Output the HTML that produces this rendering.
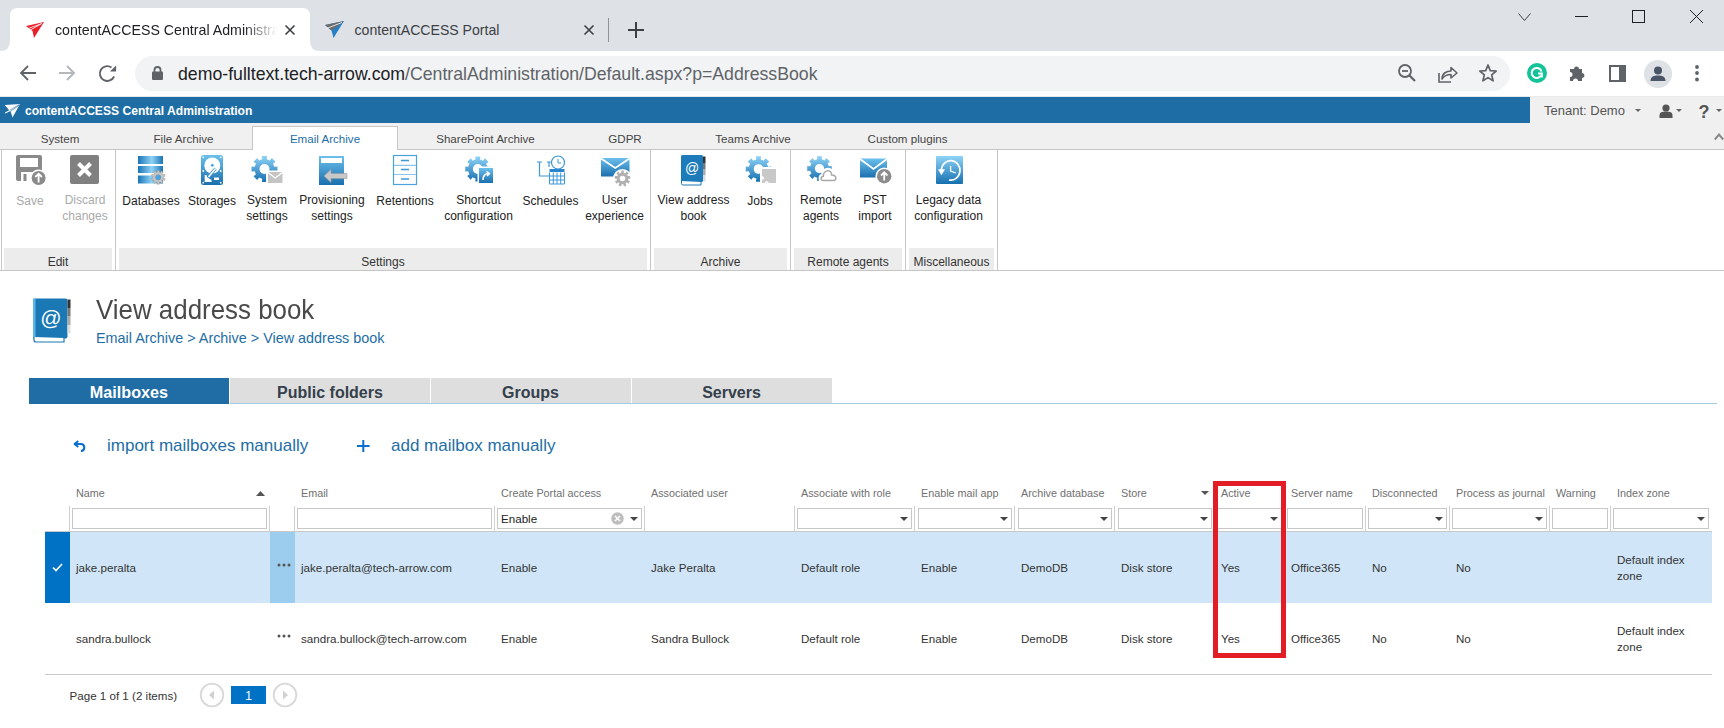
<!DOCTYPE html>
<html><head><meta charset="utf-8">
<style>
*{box-sizing:border-box;margin:0;padding:0}
html,body{width:1724px;height:728px;overflow:hidden;background:#fff;font-family:"Liberation Sans",sans-serif}
body{position:relative}
.a{position:absolute;white-space:nowrap}
svg.a{overflow:visible}
</style></head><body>
<div class="a" style="left:0px;top:0px;width:1724px;height:51px;background:#dee1e6;"></div>
<svg class="a" style="left:0px;top:0px" width="330" height="52" viewBox="0 0 330 52"><path d="M0 51 Q10 51 10 41 L10 16 Q10 8 18 8 L302 8 Q310 8 310 16 L310 41 Q310 51 320 51 Z" fill="#fff"/></svg>
<svg class="a" style="left:26px;top:22px" width="18" height="16" viewBox="0 0 18 16"><path d="M0 4 L18 0 L8 16 L6.5 9 Z" fill="#e8202a"/><path d="M1 7 L16 1.5 M2.5 9 L15 2" stroke="#fff" stroke-width="0.8"/></svg>
<div class="a" style="left:55px;top:22.8px;width:222px;overflow:hidden;font-size:14.2px;line-height:1;color:#202124;-webkit-mask-image:linear-gradient(90deg,#000 85%,transparent 100%)">contentACCESS Central Administration</div>
<svg class="a" style="left:285px;top:25px" width="10" height="10" viewBox="0 0 10 10"><path d="M0.5 0.5 L9.5 9.5 M9.5 0.5 L0.5 9.5" stroke="#3c4043" stroke-width="1.6"/></svg>
<svg class="a" style="left:325px;top:21px" width="19" height="17" viewBox="0 0 19 17"><path d="M0 4 L19 0 L8.5 17 L6.5 9.5 Z" fill="#2a7fc4"/><path d="M0 4 L19 0 L6.5 9.5 Z" fill="#6b6b6b"/><path d="M1.5 7.5 L17 1.5" stroke="#fff" stroke-width="0.8"/></svg>
<div class="a" style="left:354.5px;top:22.86px;font-size:14.1px;line-height:1;color:#3c4043;font-weight:normal;">contentACCESS Portal</div>
<svg class="a" style="left:584px;top:25px" width="10" height="10" viewBox="0 0 10 10"><path d="M0.5 0.5 L9.5 9.5 M9.5 0.5 L0.5 9.5" stroke="#3c4043" stroke-width="1.6"/></svg>
<div class="a" style="left:608px;top:18px;width:1px;height:24px;background:#8f9296;"></div>
<svg class="a" style="left:628px;top:22px" width="16" height="16" viewBox="0 0 16 16"><path d="M8 0 V16 M0 8 H16" stroke="#3c4043" stroke-width="2"/></svg>
<svg class="a" style="left:1518px;top:12.7px" width="13" height="9" viewBox="0 0 13 9"><path d="M0.5 0.5 L6.5 7.5 L12.5 0.5" stroke="#3c4043" stroke-width="1" fill="none"/></svg>
<div class="a" style="left:1575px;top:16px;width:13px;height:1px;background:#202124;"></div>
<div class="a" style="left:1632px;top:10px;width:13px;height:13px;background:transparent;border:1px solid #202124"></div>
<svg class="a" style="left:1690px;top:10px" width="13" height="13" viewBox="0 0 13 13"><path d="M0 0 L13 13 M13 0 L0 13" stroke="#202124" stroke-width="1"/></svg>
<div class="a" style="left:0px;top:51px;width:1724px;height:46px;background:#fff;"></div>
<div class="a" style="left:0px;top:96px;width:1724px;height:1px;background:#e8e9ea;"></div>
<svg class="a" style="left:18.7px;top:64px" width="18" height="18" viewBox="0 0 18 18"><path d="M17 9 H2 M9 2 L2 9 L9 16" stroke="#5f6368" stroke-width="1.8" fill="none"/></svg>
<svg class="a" style="left:58px;top:64px" width="18" height="18" viewBox="0 0 18 18"><path d="M1 9 H16 M9 2 L16 9 L9 16" stroke="#b5b8bb" stroke-width="2" fill="none"/></svg>
<svg class="a" style="left:99px;top:64px" width="18" height="18" viewBox="0 0 18 18"><path d="M15.1 12.3 A7.4 7.4 0 1 1 12.5 3.5" stroke="#5f6368" stroke-width="1.9" fill="none"/><path d="M17.1 1.6 L17.1 7.6 L10.9 7.6 Z" fill="#5f6368"/></svg>
<div class="a" style="left:135px;top:56px;width:1375px;height:35px;background:#f1f3f4;border-radius:18px"></div>
<svg class="a" style="left:152px;top:66px" width="11" height="14" viewBox="0 0 11 14"><rect x="0" y="5.5" width="11" height="8.5" rx="1" fill="#5f6368"/><path d="M2.5 6 V4 A3 3 0 0 1 8.5 4 V6" stroke="#5f6368" stroke-width="1.8" fill="none"/></svg>
<div class="a" style="left:178px;top:65.62px;font-size:17.7px;line-height:1;color:#202124;font-weight:normal;">demo-fulltext.tech-arrow.com<span style="color:#5f6368">/CentralAdministration/Default.aspx?p=AddressBook</span></div>
<svg class="a" style="left:1398px;top:64px" width="18" height="18" viewBox="0 0 18 18"><circle cx="7" cy="7" r="6" stroke="#5f6368" stroke-width="1.8" fill="none"/><path d="M4 7 H10" stroke="#5f6368" stroke-width="1.8"/><path d="M11.5 11.5 L17 17" stroke="#5f6368" stroke-width="2.2"/></svg>
<svg class="a" style="left:1438px;top:65px" width="20" height="18" viewBox="0 0 20 18"><path d="M1 8 V17 H13" stroke="#5f6368" stroke-width="1.6" fill="none"/><path d="M4 14 C4 8 9 6 13 6 V2.5 L19 8 L13 13 V9.5 C9 9.5 6 11 4 14 Z" stroke="#5f6368" stroke-width="1.6" fill="none" stroke-linejoin="round"/></svg>
<svg class="a" style="left:1479px;top:64px" width="18" height="18" viewBox="0 0 18 18"><path d="M9 1 L11.3 6.6 L17.2 7 L12.7 10.9 L14.1 16.8 L9 13.6 L3.9 16.8 L5.3 10.9 L0.8 7 L6.7 6.6 Z" stroke="#5f6368" stroke-width="1.7" fill="none" stroke-linejoin="round"/></svg>
<svg class="a" style="left:1527px;top:63px" width="20" height="20" viewBox="0 0 20 20"><circle cx="10" cy="10" r="10" fill="#15c39a"/><path d="M14.5 8.5 A5 5 0 1 0 14 12.5" stroke="#fff" stroke-width="2" fill="none"/><path d="M11 10.5 H15 V14.5" stroke="#fff" stroke-width="1.8" fill="none"/></svg>
<svg class="a" style="left:1568px;top:64px" width="18" height="18" viewBox="0 0 18 18"><path d="M2 5 H6 A2.5 2.5 0 0 1 11 5 H14 V9 A2.5 2.5 0 0 1 14 14 V17 H10 A2.5 2.5 0 0 0 5 17 H2 V13 A2.5 2.5 0 0 0 2 8 Z" fill="#5f6368"/></svg>
<div class="a" style="left:1609px;top:65px;width:17px;height:17px;background:transparent;border:2.5px solid #5f6368;border-right-width:7px"></div>
<svg class="a" style="left:1644px;top:60px" width="28" height="28" viewBox="0 0 28 28"><circle cx="14" cy="14" r="14" fill="#dee1e6"/><circle cx="14" cy="10.5" r="4" fill="#4a5568"/><path d="M6.5 21 C6.5 16.5 10 15.5 14 15.5 C18 15.5 21.5 16.5 21.5 21 Z" fill="#4a5568"/></svg>
<svg class="a" style="left:1694px;top:64px" width="6" height="18" viewBox="0 0 6 18"><circle cx="3" cy="3" r="1.9" fill="#5f6368"/><circle cx="3" cy="9" r="1.9" fill="#5f6368"/><circle cx="3" cy="15.5" r="1.9" fill="#5f6368"/></svg>
<div class="a" style="left:0px;top:97px;width:1530px;height:26px;background:#1e6ea5;"></div>
<div class="a" style="left:1530px;top:97px;width:194px;height:26px;background:#f0f0f0;"></div>
<svg class="a" style="left:4px;top:103px" width="17" height="15" viewBox="0 0 17 15"><path d="M0.8 2 L16 0.9 L8.5 14.6 L7 9.5 Z" fill="#fff"/><path d="M2 9.6 L15.5 1.3 M3.5 10.5 L15 2.3" stroke="#1e6ea5" stroke-width="0.6"/><path d="M1.2 10 L6 7.5" stroke="#fff" stroke-width="1.2"/></svg>
<div class="a" style="left:25px;top:105.26px;font-size:12.1px;line-height:1;color:#fff;font-weight:bold;">contentACCESS Central Administration</div>
<div class="a" style="left:1544px;top:103.90px;font-size:13px;line-height:1;color:#555;font-weight:normal;">Tenant: Demo</div>
<svg class="a" style="left:1635.0px;top:108.5px" width="6" height="3" viewBox="0 0 6 3"><path d="M0 0 L6 0 L3.0 3 Z" fill="#666"/></svg>
<svg class="a" style="left:1659px;top:104px" width="14" height="14" viewBox="0 0 14 14"><circle cx="7" cy="4" r="3.6" fill="#555"/><path d="M0.5 14 V11.5 C0.5 8.5 3 7.6 7 7.6 C11 7.6 13.5 8.5 13.5 11.5 V14 Z" fill="#555"/></svg>
<svg class="a" style="left:1675.5px;top:108.5px" width="6" height="3" viewBox="0 0 6 3"><path d="M0 0 L6 0 L3.0 3 Z" fill="#666"/></svg>
<div class="a" style="left:1698.5px;top:103.26px;font-size:18px;line-height:1;color:#555;font-weight:bold;">?</div>
<svg class="a" style="left:1716.0px;top:108.5px" width="6" height="3" viewBox="0 0 6 3"><path d="M0 0 L6 0 L3.0 3 Z" fill="#666"/></svg>
<div class="a" style="left:0px;top:123px;width:1724px;height:27px;background:#f0f0f0;"></div>
<div class="a" style="left:0px;top:149px;width:1724px;height:1px;background:#c6c6c6;"></div>
<div class="a" style="left:252px;top:126px;width:146px;height:24px;background:#fff;border:1px solid #c6c6c6;border-bottom:none"></div>
<div class="a" style="left:-40.0px;width:200px;text-align:center;top:133.18px;font-size:11.6px;line-height:1;color:#444;font-weight:normal;">System</div>
<div class="a" style="left:83.5px;width:200px;text-align:center;top:133.18px;font-size:11.6px;line-height:1;color:#444;font-weight:normal;">File Archive</div>
<div class="a" style="left:225.0px;width:200px;text-align:center;top:133.18px;font-size:11.6px;line-height:1;color:#1e6ea5;font-weight:normal;">Email Archive</div>
<div class="a" style="left:385.5px;width:200px;text-align:center;top:133.18px;font-size:11.6px;line-height:1;color:#444;font-weight:normal;">SharePoint Archive</div>
<div class="a" style="left:525.0px;width:200px;text-align:center;top:133.18px;font-size:11.6px;line-height:1;color:#444;font-weight:normal;">GDPR</div>
<div class="a" style="left:653.0px;width:200px;text-align:center;top:133.18px;font-size:11.6px;line-height:1;color:#444;font-weight:normal;">Teams Archive</div>
<div class="a" style="left:807.5px;width:200px;text-align:center;top:133.18px;font-size:11.6px;line-height:1;color:#444;font-weight:normal;">Custom plugins</div>
<svg class="a" style="left:1714px;top:133px" width="10" height="7" viewBox="0 0 10 7"><path d="M0.8 6.5 L5 1.5 L9.2 6.5" stroke="#8a8a8a" stroke-width="2" fill="none"/></svg>
<div class="a" style="left:0px;top:270px;width:1724px;height:1px;background:#c6c6c6;"></div>
<div class="a" style="left:4px;top:248px;width:108px;height:22px;background:#ececec;"></div>
<div class="a" style="left:-6.0px;width:128px;text-align:center;top:255.64px;font-size:12px;line-height:1;color:#333;font-weight:normal;">Edit</div>
<div class="a" style="left:119px;top:248px;width:528px;height:22px;background:#ececec;"></div>
<div class="a" style="left:109.0px;width:548px;text-align:center;top:255.64px;font-size:12px;line-height:1;color:#333;font-weight:normal;">Settings</div>
<div class="a" style="left:654px;top:248px;width:133px;height:22px;background:#ececec;"></div>
<div class="a" style="left:644.0px;width:153px;text-align:center;top:255.64px;font-size:12px;line-height:1;color:#333;font-weight:normal;">Archive</div>
<div class="a" style="left:794px;top:248px;width:108px;height:22px;background:#ececec;"></div>
<div class="a" style="left:784.0px;width:128px;text-align:center;top:255.64px;font-size:12px;line-height:1;color:#333;font-weight:normal;">Remote agents</div>
<div class="a" style="left:909px;top:248px;width:85px;height:22px;background:#ececec;"></div>
<div class="a" style="left:899.0px;width:105px;text-align:center;top:255.64px;font-size:12px;line-height:1;color:#333;font-weight:normal;">Miscellaneous</div>
<div class="a" style="left:1px;top:150px;width:1px;height:120px;background:#c6c6c6;"></div>
<div class="a" style="left:115px;top:150px;width:1px;height:120px;background:#c6c6c6;"></div>
<div class="a" style="left:650px;top:150px;width:1px;height:120px;background:#c6c6c6;"></div>
<div class="a" style="left:790px;top:150px;width:1px;height:120px;background:#c6c6c6;"></div>
<div class="a" style="left:905px;top:150px;width:1px;height:120px;background:#c6c6c6;"></div>
<div class="a" style="left:997px;top:150px;width:1px;height:120px;background:#c6c6c6;"></div>
<div class="a" style="left:-20.0px;width:100px;text-align:center;top:194.84px;font-size:12px;line-height:1;color:#aaa;font-weight:normal;">Save</div>
<div class="a" style="left:35.0px;width:100px;text-align:center;top:193.84px;font-size:12px;line-height:1;color:#aaa;font-weight:normal;">Discard</div>
<div class="a" style="left:35.0px;width:100px;text-align:center;top:209.84px;font-size:12px;line-height:1;color:#aaa;font-weight:normal;">changes</div>
<div class="a" style="left:101.0px;width:100px;text-align:center;top:194.84px;font-size:12px;line-height:1;color:#222;font-weight:normal;">Databases</div>
<div class="a" style="left:162.0px;width:100px;text-align:center;top:194.84px;font-size:12px;line-height:1;color:#222;font-weight:normal;">Storages</div>
<div class="a" style="left:217.0px;width:100px;text-align:center;top:193.84px;font-size:12px;line-height:1;color:#222;font-weight:normal;">System</div>
<div class="a" style="left:217.0px;width:100px;text-align:center;top:209.84px;font-size:12px;line-height:1;color:#222;font-weight:normal;">settings</div>
<div class="a" style="left:282.0px;width:100px;text-align:center;top:193.84px;font-size:12px;line-height:1;color:#222;font-weight:normal;">Provisioning</div>
<div class="a" style="left:282.0px;width:100px;text-align:center;top:209.84px;font-size:12px;line-height:1;color:#222;font-weight:normal;">settings</div>
<div class="a" style="left:355.0px;width:100px;text-align:center;top:194.84px;font-size:12px;line-height:1;color:#222;font-weight:normal;">Retentions</div>
<div class="a" style="left:428.5px;width:100px;text-align:center;top:193.84px;font-size:12px;line-height:1;color:#222;font-weight:normal;">Shortcut</div>
<div class="a" style="left:428.5px;width:100px;text-align:center;top:209.84px;font-size:12px;line-height:1;color:#222;font-weight:normal;">configuration</div>
<div class="a" style="left:500.5px;width:100px;text-align:center;top:194.84px;font-size:12px;line-height:1;color:#222;font-weight:normal;">Schedules</div>
<div class="a" style="left:564.5px;width:100px;text-align:center;top:193.84px;font-size:12px;line-height:1;color:#222;font-weight:normal;">User</div>
<div class="a" style="left:564.5px;width:100px;text-align:center;top:209.84px;font-size:12px;line-height:1;color:#222;font-weight:normal;">experience</div>
<div class="a" style="left:643.5px;width:100px;text-align:center;top:193.84px;font-size:12px;line-height:1;color:#222;font-weight:normal;">View address</div>
<div class="a" style="left:643.5px;width:100px;text-align:center;top:209.84px;font-size:12px;line-height:1;color:#222;font-weight:normal;">book</div>
<div class="a" style="left:710.0px;width:100px;text-align:center;top:194.84px;font-size:12px;line-height:1;color:#222;font-weight:normal;">Jobs</div>
<div class="a" style="left:771.0px;width:100px;text-align:center;top:193.84px;font-size:12px;line-height:1;color:#222;font-weight:normal;">Remote</div>
<div class="a" style="left:771.0px;width:100px;text-align:center;top:209.84px;font-size:12px;line-height:1;color:#222;font-weight:normal;">agents</div>
<div class="a" style="left:825.0px;width:100px;text-align:center;top:193.84px;font-size:12px;line-height:1;color:#222;font-weight:normal;">PST</div>
<div class="a" style="left:825.0px;width:100px;text-align:center;top:209.84px;font-size:12px;line-height:1;color:#222;font-weight:normal;">import</div>
<div class="a" style="left:898.5px;width:100px;text-align:center;top:193.84px;font-size:12px;line-height:1;color:#222;font-weight:normal;">Legacy data</div>
<div class="a" style="left:898.5px;width:100px;text-align:center;top:209.84px;font-size:12px;line-height:1;color:#222;font-weight:normal;">configuration</div>
<svg width="0" height="0" style="position:absolute"><defs>
<linearGradient id="gb" x1="0" y1="0" x2="0" y2="1"><stop offset="0" stop-color="#8fd3f7"/><stop offset="1" stop-color="#1670b0"/></linearGradient>
<linearGradient id="gbh" x1="0" y1="0" x2="1" y2="0"><stop offset="0" stop-color="#1a74b6"/><stop offset="0.55" stop-color="#8ed2f6"/><stop offset="1" stop-color="#1a74b6"/></linearGradient>
<linearGradient id="gbd" x1="0" y1="0" x2="0" y2="1"><stop offset="0" stop-color="#6cc0ec"/><stop offset="1" stop-color="#1a6fae"/></linearGradient>
<linearGradient id="gtab" x1="0" y1="0" x2="0" y2="1"><stop offset="0" stop-color="#333"/><stop offset="0.25" stop-color="#333"/><stop offset="0.25" stop-color="#777"/><stop offset="0.5" stop-color="#777"/><stop offset="0.5" stop-color="#aaa"/><stop offset="0.75" stop-color="#aaa"/><stop offset="0.75" stop-color="#ddd"/><stop offset="1" stop-color="#ddd"/></linearGradient>
</defs></svg>
<svg class="a" style="left:16px;top:155px;overflow:visible" width="31" height="31" viewBox="0 0 31 31"><rect x="0" y="0" width="26" height="26" rx="2" fill="#8a8a8a"/><rect x="4" y="3" width="18" height="9" fill="#fff"/><rect x="5" y="17" width="12" height="9" fill="#fff"/><rect x="7.5" y="19" width="3" height="7" fill="#8a8a8a"/><circle cx="22.6" cy="23" r="8.5" fill="#fff"/><circle cx="22.6" cy="23" r="7" fill="#8a8a8a"/><path d="M22.6 27.5 V19 M19.3 22 L22.6 18.7 L25.9 22" stroke="#fff" stroke-width="1.8" fill="none"/></svg>
<svg class="a" style="left:70px;top:155px;overflow:visible" width="29" height="29" viewBox="0 0 29 29"><rect x="0" y="0" width="29" height="29" rx="2" fill="#808080"/><path d="M8.5 8.5 L20.5 20.5 M20.5 8.5 L8.5 20.5" stroke="#fff" stroke-width="4"/></svg>
<svg class="a" style="left:138px;top:156px;overflow:visible" width="28" height="28" viewBox="0 0 28 28"><rect x="0" y="0" width="25" height="8" fill="url(#gbh)"/><rect x="0" y="10" width="25" height="7" fill="url(#gbh)"/><rect x="0" y="19.5" width="25" height="8" fill="url(#gbh)"/><path d="M13 19 H14 V17 H13 Z" fill="#fff"/><path d="M18.56 16.26 L19.24 16.09 L19.10 14.39 L21.30 14.39 L21.16 16.09 L21.84 16.26 L22.49 16.52 L23.38 15.06 L25.15 16.35 L24.04 17.65 L24.49 18.18 L24.86 18.78 L26.44 18.12 L27.11 20.20 L25.45 20.60 L25.50 21.30 L25.45 22.00 L27.11 22.40 L26.44 24.48 L24.86 23.82 L24.49 24.42 L24.04 24.95 L25.15 26.25 L23.38 27.54 L22.49 26.08 L21.84 26.34 L21.16 26.51 L21.30 28.21 L19.10 28.21 L19.24 26.51 L18.56 26.34 L17.91 26.08 L17.02 27.54 L15.25 26.25 L16.36 24.95 L15.91 24.42 L15.54 23.82 L13.96 24.48 L13.29 22.40 L14.95 22.00 L14.90 21.30 L14.95 20.60 L13.29 20.20 L13.96 18.12 L15.54 18.78 L15.91 18.18 L16.36 17.65 L15.25 16.35 L17.02 15.06 L17.91 16.52 Z M22.80 21.30 A2.6 2.6 0 1 0 17.60 21.30 A2.6 2.6 0 1 0 22.80 21.30 Z" fill="#c4c4c4" stroke="#9a9a9a" stroke-width="0.5" fill-rule="evenodd"/><circle cx="20.2" cy="21.3" r="2.6" fill="#4aa3dd"/></svg>
<svg class="a" style="left:201px;top:155px;overflow:visible" width="22" height="30" viewBox="0 0 22 30"><rect x="0" y="0" width="22" height="30" rx="2.5" fill="url(#gbd)"/><circle cx="11.3" cy="10.5" r="8" fill="#fff"/><circle cx="11.3" cy="10.3" r="1.4" fill="#4aa3dd"/><path d="M3.7 20 V27 H10.5 V25 L6 22 L5.5 20 Z" fill="#fff"/><rect x="13" y="22.5" width="5" height="2.5" fill="#fff"/><path d="M7.5 22 L14.5 13.5" stroke="#3d95d2" stroke-width="3"/><path d="M7.5 22 L14.5 13.5" stroke="#fff" stroke-width="1.5"/><circle cx="2.3" cy="2.3" r="0.9" fill="#fff"/><circle cx="19.7" cy="2.3" r="0.9" fill="#fff"/><circle cx="2.3" cy="27.7" r="0.9" fill="#fff"/><circle cx="19.7" cy="27.7" r="0.9" fill="#fff"/><circle cx="2.3" cy="16" r="0.9" fill="#fff"/><circle cx="19.7" cy="16" r="0.9" fill="#fff"/></svg>
<svg class="a" style="left:251px;top:155px;overflow:visible" width="32" height="30" viewBox="0 0 32 30"><path d="M9.67 4.76 L11.24 4.26 L10.92 1.05 L16.08 1.05 L15.76 4.26 L17.33 4.76 L18.79 5.51 L20.83 3.02 L24.48 6.67 L21.99 8.71 L22.74 10.17 L23.24 11.74 L26.45 11.42 L26.45 16.58 L23.24 16.26 L22.74 17.83 L21.99 19.29 L24.48 21.33 L20.83 24.98 L18.79 22.49 L17.33 23.24 L15.76 23.74 L16.08 26.95 L10.92 26.95 L11.24 23.74 L9.67 23.24 L8.21 22.49 L6.17 24.98 L2.52 21.33 L5.01 19.29 L4.26 17.83 L3.76 16.26 L0.55 16.58 L0.55 11.42 L3.76 11.74 L4.26 10.17 L5.01 8.71 L2.52 6.67 L6.17 3.02 L8.21 5.51 Z M18.50 14.00 A5 5 0 1 0 8.50 14.00 A5 5 0 1 0 18.50 14.00 Z" fill="url(#gb)" fill-rule="evenodd"/><rect x="15" y="15.5" width="17" height="13" fill="#fff"/><rect x="17" y="17" width="14.5" height="11" fill="#c4c4c4"/><path d="M17 17.5 L24.2 23 L31.5 17.5" stroke="#fff" stroke-width="1.3" fill="none"/></svg>
<svg class="a" style="left:319px;top:156px;overflow:visible" width="29" height="29" viewBox="0 0 29 29"><rect x="0" y="0" width="25" height="29" fill="url(#gbd)"/><rect x="2" y="2" width="21" height="5" fill="#fff"/><path d="M5 20 L12 13.5 V17.5 H28 V22.5 H12 V26.5 Z" fill="#c8c8c8" stroke="#9a9a9a" stroke-width="0.6"/></svg>
<svg class="a" style="left:393px;top:155px;overflow:visible" width="24" height="30" viewBox="0 0 24 30"><rect x="0.5" y="0.5" width="23" height="29" fill="#fff" stroke="#4aa2dc" stroke-width="1.2"/><path d="M1 10.3 H23 M1 19.5 H23" stroke="#8ac6ec" stroke-width="1.2"/><path d="M8 5.5 H16 M8 14.5 H16 M8 24 H16" stroke="#3d98d8" stroke-width="1.3"/></svg>
<svg class="a" style="left:465px;top:155px;overflow:visible" width="29" height="29" viewBox="0 0 29 29"><path d="M9.05 4.95 L10.59 4.45 L10.30 1.45 L15.30 1.45 L15.01 4.45 L16.55 4.95 L17.99 5.68 L19.91 3.36 L23.44 6.89 L21.12 8.81 L21.85 10.25 L22.35 11.79 L25.35 11.50 L25.35 16.50 L22.35 16.21 L21.85 17.75 L21.12 19.19 L23.44 21.11 L19.91 24.64 L17.99 22.32 L16.55 23.05 L15.01 23.55 L15.30 26.55 L10.30 26.55 L10.59 23.55 L9.05 23.05 L7.61 22.32 L5.69 24.64 L2.16 21.11 L4.48 19.19 L3.75 17.75 L3.25 16.21 L0.25 16.50 L0.25 11.50 L3.25 11.79 L3.75 10.25 L4.48 8.81 L2.16 6.89 L5.69 3.36 L7.61 5.68 Z M17.70 14.00 A4.9 4.9 0 1 0 7.90 14.00 A4.9 4.9 0 1 0 17.70 14.00 Z" fill="url(#gb)" fill-rule="evenodd"/><rect x="12.5" y="11.5" width="17" height="17.5" fill="#fff"/><rect x="14" y="13" width="14" height="15" fill="url(#gbd)"/><path d="M18 25 C18 20 20 18.5 24 18.5 M21.5 16.5 L24.5 18.5 L22 21" stroke="#fff" stroke-width="1.5" fill="none"/></svg>
<svg class="a" style="left:536px;top:155px;overflow:visible" width="30" height="30" viewBox="0 0 30 30"><circle cx="22" cy="7.5" r="6.5" fill="#fff" stroke="#3d98d8" stroke-width="1.2"/><path d="M22 4 V8 H25" stroke="#3d98d8" stroke-width="1" fill="none"/><path d="M1 7 H6 M11 7 H15 M3.5 7 V21 H13.5 M13 7 V12" stroke="#3d98d8" stroke-width="1.2" fill="none"/><rect x="13.5" y="14" width="15" height="3" fill="#2a86cc"/><path d="M13.5 17.5 V29 M17.3 17.5 V29 M21 17.5 V29 M24.7 17.5 V29 M28.5 17.5 V29 M13.5 21 H28.5 M13.5 25 H28.5 M13.5 29 H28.5" stroke="#3d98d8" stroke-width="1"/></svg>
<svg class="a" style="left:601px;top:157px;overflow:visible" width="31" height="31" viewBox="0 0 31 31"><rect x="0" y="1" width="28.5" height="18.5" fill="url(#gbd)"/><path d="M0 1.5 L14.25 11 L28.5 1.5" stroke="#fff" stroke-width="1.8" fill="none"/><circle cx="21.5" cy="21.5" r="9.5" fill="#fff"/><path d="M19.52 16.05 L20.33 15.82 L20.11 13.62 L22.89 13.62 L22.67 15.82 L23.48 16.05 L24.26 16.40 L25.50 14.57 L27.63 16.36 L26.05 17.90 L26.52 18.60 L26.89 19.36 L29.02 18.76 L29.50 21.50 L27.30 21.66 L27.21 22.51 L27.00 23.33 L29.02 24.24 L27.63 26.64 L25.84 25.35 L25.23 25.94 L24.54 26.44 L25.50 28.43 L22.89 29.38 L22.35 27.24 L21.50 27.30 L20.65 27.24 L20.11 29.38 L17.50 28.43 L18.46 26.44 L17.77 25.94 L17.16 25.35 L15.37 26.64 L13.98 24.24 L16.00 23.33 L15.79 22.51 L15.70 21.66 L13.50 21.50 L13.98 18.76 L16.11 19.36 L16.48 18.60 L16.95 17.90 L15.37 16.36 L17.50 14.57 L18.74 16.40 Z M24.30 21.50 A2.8 2.8 0 1 0 18.70 21.50 A2.8 2.8 0 1 0 24.30 21.50 Z" fill="#b0b0b0" fill-rule="evenodd"/></svg>
<svg class="a" style="left:681px;top:155px;overflow:visible" width="26" height="31" viewBox="0 0 26 31"><rect x="0" y="0" width="22" height="27" rx="1.5" fill="#1c7bb8"/><rect x="22" y="1.5" width="2.5" height="25" fill="url(#gtab)"/><path d="M0.5 26 V28.5 Q0.5 30 2 30 H20 V27" stroke="#1c7bb8" stroke-width="1" fill="#fff"/><text x="11.2" y="17.8" font-family="Liberation Sans" font-size="14" fill="#fff" text-anchor="middle">@</text></svg>
<svg class="a" style="left:745px;top:155px;overflow:visible" width="31" height="29" viewBox="0 0 31 29"><path d="M9.75 4.95 L11.29 4.45 L10.96 1.25 L16.04 1.25 L15.71 4.45 L17.25 4.95 L18.69 5.68 L20.72 3.19 L24.31 6.78 L21.82 8.81 L22.55 10.25 L23.05 11.79 L26.25 11.46 L26.25 16.54 L23.05 16.21 L22.55 17.75 L21.82 19.19 L24.31 21.22 L20.72 24.81 L18.69 22.32 L17.25 23.05 L15.71 23.55 L16.04 26.75 L10.96 26.75 L11.29 23.55 L9.75 23.05 L8.31 22.32 L6.28 24.81 L2.69 21.22 L5.18 19.19 L4.45 17.75 L3.95 16.21 L0.75 16.54 L0.75 11.46 L3.95 11.79 L4.45 10.25 L5.18 8.81 L2.69 6.78 L6.28 3.19 L8.31 5.68 Z M18.30 14.00 A4.8 4.8 0 1 0 8.70 14.00 A4.8 4.8 0 1 0 18.30 14.00 Z" fill="url(#gb)" fill-rule="evenodd"/><rect x="15" y="12" width="16" height="16.5" fill="#fff"/><path d="M17 14 H31 V28 H24 L21.5 25.5 L19.5 28 H17 V25.5 L19.5 23.2 L17 20.5 Z" fill="#c8c8c8"/></svg>
<svg class="a" style="left:807px;top:155px;overflow:visible" width="31" height="28" viewBox="0 0 31 28"><path d="M8.86 4.72 L10.35 4.25 L10.06 1.24 L14.94 1.24 L14.65 4.25 L16.14 4.72 L17.53 5.44 L19.44 3.11 L22.89 6.56 L20.56 8.47 L21.28 9.86 L21.75 11.35 L24.76 11.06 L24.76 15.94 L21.75 15.65 L21.28 17.14 L20.56 18.53 L22.89 20.44 L19.44 23.89 L17.53 21.56 L16.14 22.28 L14.65 22.75 L14.94 25.76 L10.06 25.76 L10.35 22.75 L8.86 22.28 L7.47 21.56 L5.56 23.89 L2.11 20.44 L4.44 18.53 L3.72 17.14 L3.25 15.65 L0.24 15.94 L0.24 11.06 L3.25 11.35 L3.72 9.86 L4.44 8.47 L2.11 6.56 L5.56 3.11 L7.47 5.44 Z M17.10 13.50 A4.6 4.6 0 1 0 7.90 13.50 A4.6 4.6 0 1 0 17.10 13.50 Z" fill="url(#gb)" fill-rule="evenodd"/><path d="M16 26.5 C12.5 26.5 12.5 21 15.5 20.5 C15.5 17 18 14.5 21 14.5 C24 14.5 25.5 17 25.5 19 C28.5 19 30 21 30 23 C30 25.5 28.5 26.5 27 26.5 Z" fill="#fff" stroke="#fff" stroke-width="3.5"/><path d="M16 25.5 C13.5 25.5 13.5 21.5 16.3 21.3 C16.3 18 18.5 15.8 21 15.8 C23.5 15.8 24.8 18 24.6 20 C27.5 19.8 28.8 21.5 28.8 23 C28.8 24.8 27.8 25.5 26.5 25.5 Z" fill="#fff" stroke="#a8a8a8" stroke-width="1.5"/></svg>
<svg class="a" style="left:860px;top:158px;overflow:visible" width="33" height="27" viewBox="0 0 33 27"><rect x="0" y="0.5" width="27" height="19" fill="url(#gbd)"/><path d="M0 1 L13.5 11 L27 1" stroke="#fff" stroke-width="1.8" fill="none"/><circle cx="24.2" cy="18.2" r="8.7" fill="#fff"/><circle cx="24.2" cy="18.2" r="7.2" fill="#8c8c8c"/><path d="M24.2 22.5 V14.5 M21 17.5 L24.2 14.3 L27.4 17.5" stroke="#fff" stroke-width="1.8" fill="none"/></svg>
<svg class="a" style="left:936px;top:156px;overflow:visible" width="27" height="28" viewBox="0 0 27 28"><rect x="0" y="0" width="27" height="28" rx="1" fill="url(#gb)"/><path d="M5.4 14 A9.3 9.8 0 1 1 13 24" stroke="#fff" stroke-width="1.7" fill="none"/><path d="M2 13.2 L9 13.2 L5.4 19.3 Z" fill="#fff"/><path d="M14.6 10 V15 L19.8 17" stroke="#fff" stroke-width="1.3" fill="none"/></svg>
<svg class="a" style="left:33px;top:298px;overflow:visible" width="38" height="46" viewBox="0 0 38 46"><rect x="0" y="0.5" width="34.5" height="40" rx="2" fill="#1a79b5"/><rect x="0" y="0.5" width="2.5" height="40" fill="#5ab5ea"/><rect x="34.5" y="1.5" width="3" height="34" fill="url(#gtab)"/><path d="M1 39 V42 Q1 44 3 44 H31 V40" stroke="#1a79b5" stroke-width="1.2" fill="#fff"/><text x="17.8" y="26.5" font-family="Liberation Sans" font-size="21" fill="#fff" text-anchor="middle">@</text></svg>
<div class="a" style="left:96px;top:294.84px;font-size:28.3px;line-height:1;color:#4a4a4a;font-weight:normal;transform:scaleX(0.915);transform-origin:0 0;">View address book</div>
<div class="a" style="left:96px;top:330.51px;font-size:14.4px;line-height:1;color:#1e6ea5;font-weight:normal;">Email Archive &gt; Archive &gt; View address book</div>
<div class="a" style="left:29px;top:378px;width:200px;height:26px;background:#1f6da4;"></div>
<div class="a" style="left:230px;top:378px;width:200px;height:26px;background:#dedede;"></div>
<div class="a" style="left:431px;top:378px;width:200px;height:26px;background:#dedede;"></div>
<div class="a" style="left:632px;top:378px;width:200px;height:26px;background:#dedede;"></div>
<div class="a" style="left:230px;top:403px;width:1487px;height:1px;background:#9fcde3;"></div>
<div class="a" style="left:29.0px;width:200px;text-align:center;top:383.89px;font-size:16.2px;line-height:1;color:#fff;font-weight:bold;">Mailboxes</div>
<div class="a" style="left:230.0px;width:200px;text-align:center;top:384.66px;font-size:16px;line-height:1;color:#34404c;font-weight:bold;">Public folders</div>
<div class="a" style="left:430.5px;width:200px;text-align:center;top:384.66px;font-size:16px;line-height:1;color:#34404c;font-weight:bold;">Groups</div>
<div class="a" style="left:631.5px;width:200px;text-align:center;top:384.66px;font-size:16px;line-height:1;color:#34404c;font-weight:bold;">Servers</div>
<svg class="a" style="left:70px;top:438px" width="20" height="16" viewBox="0 0 20 16"><path d="M8.3 3 L4.5 6 L8.3 9" stroke="#0a6fce" stroke-width="1.9" fill="none" stroke-linejoin="round"/><path d="M4 6 H11.5 A3.6 3.6 0 0 1 11.5 13 H11" stroke="#0a6fce" stroke-width="2.1" fill="none"/></svg>
<div class="a" style="left:107px;top:436.91px;font-size:17px;line-height:1;color:#1e6ea5;font-weight:normal;">import mailboxes manually</div>
<svg class="a" style="left:357px;top:440px" width="13" height="12" viewBox="0 0 13 12"><path d="M6.3 0 V12 M0 6 H12.6" stroke="#0a6fce" stroke-width="2"/></svg>
<div class="a" style="left:391px;top:436.91px;font-size:17px;line-height:1;color:#1e6ea5;font-weight:normal;">add mailbox manually</div>
<div class="a" style="left:76px;top:487.86px;font-size:10.8px;line-height:1;color:#707070;font-weight:normal;">Name</div>
<div class="a" style="left:301px;top:487.86px;font-size:10.8px;line-height:1;color:#707070;font-weight:normal;">Email</div>
<div class="a" style="left:501px;top:487.86px;font-size:10.8px;line-height:1;color:#707070;font-weight:normal;">Create Portal access</div>
<div class="a" style="left:651px;top:487.86px;font-size:10.8px;line-height:1;color:#707070;font-weight:normal;">Associated user</div>
<div class="a" style="left:801px;top:487.86px;font-size:10.8px;line-height:1;color:#707070;font-weight:normal;">Associate with role</div>
<div class="a" style="left:921px;top:487.86px;font-size:10.8px;line-height:1;color:#707070;font-weight:normal;">Enable mail app</div>
<div class="a" style="left:1021px;top:487.86px;font-size:10.8px;line-height:1;color:#707070;font-weight:normal;">Archive database</div>
<div class="a" style="left:1121px;top:487.86px;font-size:10.8px;line-height:1;color:#707070;font-weight:normal;">Store</div>
<div class="a" style="left:1221px;top:487.86px;font-size:10.8px;line-height:1;color:#707070;font-weight:normal;">Active</div>
<div class="a" style="left:1291px;top:487.86px;font-size:10.8px;line-height:1;color:#707070;font-weight:normal;">Server name</div>
<div class="a" style="left:1372px;top:487.86px;font-size:10.8px;line-height:1;color:#707070;font-weight:normal;">Disconnected</div>
<div class="a" style="left:1456px;top:487.86px;font-size:10.8px;line-height:1;color:#707070;font-weight:normal;">Process as journal</div>
<div class="a" style="left:1556px;top:487.86px;font-size:10.8px;line-height:1;color:#707070;font-weight:normal;">Warning</div>
<div class="a" style="left:1617px;top:487.86px;font-size:10.8px;line-height:1;color:#707070;font-weight:normal;">Index zone</div>
<svg class="a" style="left:256px;top:491px" width="9" height="5" viewBox="0 0 9 5"><path d="M0 5 L4.5 0 L9 5 Z" fill="#555"/></svg>
<svg class="a" style="left:1201.0px;top:491.0px" width="8" height="4" viewBox="0 0 8 4"><path d="M0 0 L8 0 L4.0 4 Z" fill="#555"/></svg>
<div class="a" style="left:69px;top:506px;width:1px;height:25px;background:#d0d0d0;"></div>
<div class="a" style="left:269px;top:506px;width:1px;height:25px;background:#d0d0d0;"></div>
<div class="a" style="left:294px;top:506px;width:1px;height:25px;background:#d0d0d0;"></div>
<div class="a" style="left:494px;top:506px;width:1px;height:25px;background:#d0d0d0;"></div>
<div class="a" style="left:644px;top:506px;width:1px;height:25px;background:#d0d0d0;"></div>
<div class="a" style="left:794px;top:506px;width:1px;height:25px;background:#d0d0d0;"></div>
<div class="a" style="left:914px;top:506px;width:1px;height:25px;background:#d0d0d0;"></div>
<div class="a" style="left:1014px;top:506px;width:1px;height:25px;background:#d0d0d0;"></div>
<div class="a" style="left:1114px;top:506px;width:1px;height:25px;background:#d0d0d0;"></div>
<div class="a" style="left:1214px;top:506px;width:1px;height:25px;background:#d0d0d0;"></div>
<div class="a" style="left:1285px;top:506px;width:1px;height:25px;background:#d0d0d0;"></div>
<div class="a" style="left:1365px;top:506px;width:1px;height:25px;background:#d0d0d0;"></div>
<div class="a" style="left:1449px;top:506px;width:1px;height:25px;background:#d0d0d0;"></div>
<div class="a" style="left:1549px;top:506px;width:1px;height:25px;background:#d0d0d0;"></div>
<div class="a" style="left:1610px;top:506px;width:1px;height:25px;background:#d0d0d0;"></div>
<div class="a" style="left:72px;top:508px;width:195px;height:21px;background:#fff;border:1px solid #c8c8c8"></div>
<div class="a" style="left:297px;top:508px;width:195px;height:21px;background:#fff;border:1px solid #c8c8c8"></div>
<div class="a" style="left:497px;top:508px;width:145px;height:21px;background:#fff;border:1px solid #c8c8c8"></div>
<svg class="a" style="left:629.5px;top:516.5px" width="8" height="4" viewBox="0 0 8 4"><path d="M0 0 L8 0 L4.0 4 Z" fill="#444"/></svg>
<div class="a" style="left:797px;top:508px;width:115px;height:21px;background:#fff;border:1px solid #c8c8c8"></div>
<svg class="a" style="left:899.5px;top:516.5px" width="8" height="4" viewBox="0 0 8 4"><path d="M0 0 L8 0 L4.0 4 Z" fill="#444"/></svg>
<div class="a" style="left:918px;top:508px;width:94px;height:21px;background:#fff;border:1px solid #c8c8c8"></div>
<svg class="a" style="left:999.5px;top:516.5px" width="8" height="4" viewBox="0 0 8 4"><path d="M0 0 L8 0 L4.0 4 Z" fill="#444"/></svg>
<div class="a" style="left:1018px;top:508px;width:94px;height:21px;background:#fff;border:1px solid #c8c8c8"></div>
<svg class="a" style="left:1099.5px;top:516.5px" width="8" height="4" viewBox="0 0 8 4"><path d="M0 0 L8 0 L4.0 4 Z" fill="#444"/></svg>
<div class="a" style="left:1118px;top:508px;width:94px;height:21px;background:#fff;border:1px solid #c8c8c8"></div>
<svg class="a" style="left:1199.5px;top:516.5px" width="8" height="4" viewBox="0 0 8 4"><path d="M0 0 L8 0 L4.0 4 Z" fill="#444"/></svg>
<div class="a" style="left:1217px;top:508px;width:65px;height:21px;background:#fff;border:1px solid #c8c8c8"></div>
<svg class="a" style="left:1269.5px;top:516.5px" width="8" height="4" viewBox="0 0 8 4"><path d="M0 0 L8 0 L4.0 4 Z" fill="#444"/></svg>
<div class="a" style="left:1287px;top:508px;width:76px;height:21px;background:#fff;border:1px solid #c8c8c8"></div>
<div class="a" style="left:1368px;top:508px;width:79px;height:21px;background:#fff;border:1px solid #c8c8c8"></div>
<svg class="a" style="left:1434.5px;top:516.5px" width="8" height="4" viewBox="0 0 8 4"><path d="M0 0 L8 0 L4.0 4 Z" fill="#444"/></svg>
<div class="a" style="left:1452px;top:508px;width:95px;height:21px;background:#fff;border:1px solid #c8c8c8"></div>
<svg class="a" style="left:1534.5px;top:516.5px" width="8" height="4" viewBox="0 0 8 4"><path d="M0 0 L8 0 L4.0 4 Z" fill="#444"/></svg>
<div class="a" style="left:1552px;top:508px;width:56px;height:21px;background:#fff;border:1px solid #c8c8c8"></div>
<div class="a" style="left:1613px;top:508px;width:96px;height:21px;background:#fff;border:1px solid #c8c8c8"></div>
<svg class="a" style="left:1696.5px;top:516.5px" width="8" height="4" viewBox="0 0 8 4"><path d="M0 0 L8 0 L4.0 4 Z" fill="#444"/></svg>
<div class="a" style="left:501px;top:513.18px;font-size:11.6px;line-height:1;color:#222;font-weight:normal;">Enable</div>
<svg class="a" style="left:611px;top:512px" width="13" height="13" viewBox="0 0 13 13"><circle cx="6.5" cy="6.5" r="6.2" fill="#bdbdbd"/><path d="M4 4 L9 9 M9 4 L4 9" stroke="#fff" stroke-width="1.5"/></svg>
<div class="a" style="left:45px;top:531px;width:1667px;height:1px;background:#c8c8c8;"></div>
<div class="a" style="left:45px;top:532px;width:1667px;height:71px;background:#d0e6f8;"></div>
<div class="a" style="left:45px;top:532px;width:25px;height:71px;background:#0072c6;"></div>
<div class="a" style="left:270px;top:532px;width:25px;height:71px;background:#9ccdee;"></div>
<svg class="a" style="left:52px;top:563px" width="11" height="9" viewBox="0 0 11 9"><path d="M1 4.5 L4 7.5 L10 1" stroke="#fff" stroke-width="1.6" fill="none"/></svg>
<div class="a" style="left:45px;top:674px;width:1667px;height:1px;background:#c8c8c8;"></div>
<div class="a" style="left:76px;top:562.48px;font-size:11.6px;line-height:1;color:#333;font-weight:normal;">jake.peralta</div>
<div class="a" style="left:301px;top:562.48px;font-size:11.6px;line-height:1;color:#333;font-weight:normal;">jake.peralta@tech-arrow.com</div>
<div class="a" style="left:501px;top:562.48px;font-size:11.6px;line-height:1;color:#333;font-weight:normal;">Enable</div>
<div class="a" style="left:651px;top:562.48px;font-size:11.6px;line-height:1;color:#333;font-weight:normal;">Jake Peralta</div>
<div class="a" style="left:801px;top:562.48px;font-size:11.6px;line-height:1;color:#333;font-weight:normal;">Default role</div>
<div class="a" style="left:921px;top:562.48px;font-size:11.6px;line-height:1;color:#333;font-weight:normal;">Enable</div>
<div class="a" style="left:1021px;top:562.48px;font-size:11.6px;line-height:1;color:#333;font-weight:normal;">DemoDB</div>
<div class="a" style="left:1121px;top:562.48px;font-size:11.6px;line-height:1;color:#333;font-weight:normal;">Disk store</div>
<div class="a" style="left:1221px;top:562.48px;font-size:11.6px;line-height:1;color:#333;font-weight:normal;">Yes</div>
<div class="a" style="left:1291px;top:562.48px;font-size:11.6px;line-height:1;color:#333;font-weight:normal;">Office365</div>
<div class="a" style="left:1372px;top:562.48px;font-size:11.6px;line-height:1;color:#333;font-weight:normal;">No</div>
<div class="a" style="left:1456px;top:562.48px;font-size:11.6px;line-height:1;color:#333;font-weight:normal;">No</div>
<div class="a" style="left:1617px;top:554.48px;font-size:11.6px;line-height:1;color:#333;font-weight:normal;">Default index</div>
<div class="a" style="left:1617px;top:570.48px;font-size:11.6px;line-height:1;color:#333;font-weight:normal;">zone</div>
<svg class="a" style="left:277px;top:563.3px" width="14" height="4" viewBox="0 0 14 4"><circle cx="2" cy="2" r="1.5" fill="#555"/><circle cx="7" cy="2" r="1.5" fill="#555"/><circle cx="12" cy="2" r="1.5" fill="#555"/></svg>
<div class="a" style="left:76px;top:633.48px;font-size:11.6px;line-height:1;color:#333;font-weight:normal;">sandra.bullock</div>
<div class="a" style="left:301px;top:633.48px;font-size:11.6px;line-height:1;color:#333;font-weight:normal;">sandra.bullock@tech-arrow.com</div>
<div class="a" style="left:501px;top:633.48px;font-size:11.6px;line-height:1;color:#333;font-weight:normal;">Enable</div>
<div class="a" style="left:651px;top:633.48px;font-size:11.6px;line-height:1;color:#333;font-weight:normal;">Sandra Bullock</div>
<div class="a" style="left:801px;top:633.48px;font-size:11.6px;line-height:1;color:#333;font-weight:normal;">Default role</div>
<div class="a" style="left:921px;top:633.48px;font-size:11.6px;line-height:1;color:#333;font-weight:normal;">Enable</div>
<div class="a" style="left:1021px;top:633.48px;font-size:11.6px;line-height:1;color:#333;font-weight:normal;">DemoDB</div>
<div class="a" style="left:1121px;top:633.48px;font-size:11.6px;line-height:1;color:#333;font-weight:normal;">Disk store</div>
<div class="a" style="left:1221px;top:633.48px;font-size:11.6px;line-height:1;color:#333;font-weight:normal;">Yes</div>
<div class="a" style="left:1291px;top:633.48px;font-size:11.6px;line-height:1;color:#333;font-weight:normal;">Office365</div>
<div class="a" style="left:1372px;top:633.48px;font-size:11.6px;line-height:1;color:#333;font-weight:normal;">No</div>
<div class="a" style="left:1456px;top:633.48px;font-size:11.6px;line-height:1;color:#333;font-weight:normal;">No</div>
<div class="a" style="left:1617px;top:625.48px;font-size:11.6px;line-height:1;color:#333;font-weight:normal;">Default index</div>
<div class="a" style="left:1617px;top:641.48px;font-size:11.6px;line-height:1;color:#333;font-weight:normal;">zone</div>
<svg class="a" style="left:277px;top:634.3px" width="14" height="4" viewBox="0 0 14 4"><circle cx="2" cy="2" r="1.5" fill="#555"/><circle cx="7" cy="2" r="1.5" fill="#555"/><circle cx="12" cy="2" r="1.5" fill="#555"/></svg>
<div class="a" style="left:69.5px;top:689.68px;font-size:11.6px;line-height:1;color:#333;font-weight:normal;">Page 1 of 1 (2 items)</div>
<svg class="a" style="left:199px;top:682px" width="26" height="26" viewBox="0 0 26 26"><circle cx="13" cy="13" r="11.3" stroke="#d8d8d8" stroke-width="1.8" fill="#fff"/><path d="M15 8.5 L10 13 L15 17.5 Z" fill="#d0d0d0"/></svg>
<div class="a" style="left:231px;top:686px;width:35px;height:18px;background:#0072c6;"></div>
<div class="a" style="left:148.5px;width:200px;text-align:center;top:689.84px;font-size:12px;line-height:1;color:#fff;font-weight:normal;">1</div>
<svg class="a" style="left:272px;top:682px" width="26" height="26" viewBox="0 0 26 26"><circle cx="13" cy="13" r="11.3" stroke="#d8d8d8" stroke-width="1.8" fill="#fff"/><path d="M11 8.5 L16 13 L11 17.5 Z" fill="#d0d0d0"/></svg>
<div class="a" style="left:1213px;top:481px;width:73px;height:177px;background:transparent;border:5px solid #e31d25"></div>
</body></html>
